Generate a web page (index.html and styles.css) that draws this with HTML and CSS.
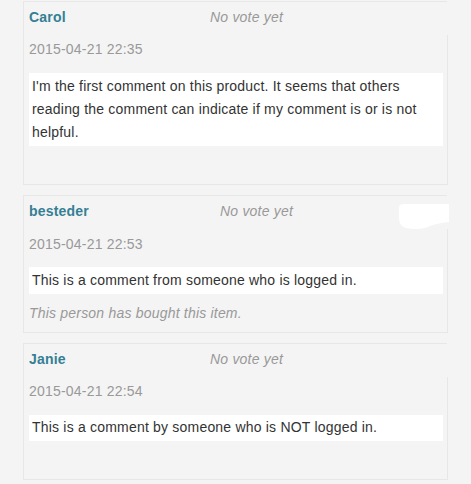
FILE: index.html
```html
<!DOCTYPE html>
<html lang="en">
<head>
<meta charset="utf-8">
<title>Comments</title>
<link rel="stylesheet" href="styles.css">
</head>
<body>
<div class="comments">
  <div class="card">
    <div class="head"><span class="name name--carol">Carol</span><span class="vote">No vote yet</span></div>
    <div class="main">
      <div class="date">2015-04-21 22:35</div>
      <div class="text">I'm the first comment on this product. It seems that others reading the comment can indicate if my comment is or is not helpful.</div>
      <div class="foot"></div>
    </div>
  </div>
  <div class="card">
    <div class="head"><span class="name name--besteder">besteder</span><span class="vote">No vote yet</span></div>
    <svg class="blob" width="52" height="28" viewBox="0 0 52 28" aria-hidden="true"><path d="M1,3 Q1,0 7,0 L51,0 L51,18 Q38,19 27,24 Q17,26 8,24 Q1,22 1,14 Z" fill="#ffffff"/></svg>
    <div class="main">
      <div class="date">2015-04-21 22:53</div>
      <div class="text">This is a comment from someone who is logged in.</div>
      <div class="foot">This person has bought this item.</div>
    </div>
  </div>
  <div class="card">
    <div class="head"><span class="name name--janie">Janie</span><span class="vote">No vote yet</span></div>
    <div class="main">
      <div class="date">2015-04-21 22:54</div>
      <div class="text">This is a comment by someone who is NOT logged in.</div>
      <div class="foot"></div>
    </div>
  </div>
</div>
</body>
</html>
```
FILE: styles.css
```css
html, body {
  margin: 0;
  background: #f4f4f4;
}
body {
  font-family: "Liberation Sans", Arial, sans-serif;
  font-size: 14px;
  line-height: 23.33px;
  letter-spacing: 0.2px;
  color: #333;
}
.comments {
  padding: 1px 0 0 23px;
  width: 425px;
}
.card {
  position: relative;
  border-left: 1px solid #e7e7e7;
  border-bottom: 1px solid #e7e7e7;
  margin-bottom: 10px;
}
.head {
  display: flex;
  border-top: 1px solid #e7e7e7;
  margin-right: 1px;
  padding: 4px 5px 5.67px;
}
.name {
  font-weight: bold;
  color: #347f95;
  flex: none;
}
.name--carol { width: 181px; }
.name--besteder { width: 191px; }
.name--janie { width: 181px; }
.vote {
  font-style: italic;
  color: #999;
}
.main {
  border-right: 1px solid #e7e7e7;
  padding: 3.5px 4px 6px 5px;
}
.date {
  color: #999;
}
.text {
  background: #fff;
  margin-top: 11.17px;
  padding: 1.67px 3px;
}
.foot {
  margin-top: 8.5px;
  min-height: 23.33px;
  font-style: italic;
  color: #999;
}
.blob {
  position: absolute;
  left: 374px;
  top: 9px;
  display: block;
}
```
